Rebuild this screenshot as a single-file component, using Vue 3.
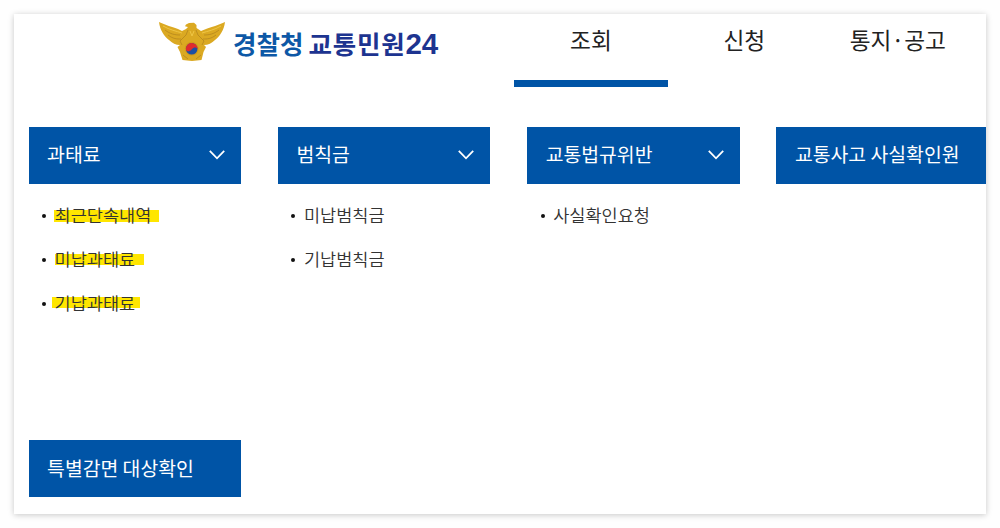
<script setup>
import { ref } from 'vue'

const tabs = ref([
  { name: '조회', active: true },
  { name: '신청', active: false },
  { name: '통지·공고', active: false },
])

const menus = ref([
  {
    title: '과태료',
    arrow: true,
    items: [
      { text: '최근단속내역', mark: 'mark_a' },
      { text: '미납과태료', mark: 'mark_b' },
      { text: '기납과태료', mark: 'mark_c' },
    ],
  },
  { title: '범칙금', arrow: true, items: [{ text: '미납범칙금' }, { text: '기납범칙금' }] },
  { title: '교통법규위반', arrow: true, items: [{ text: '사실확인요청' }] },
  { title: '교통사고 사실확인원', arrow: false, items: [] },
  { title: '특별감면 대상확인', arrow: false, items: [] },
])
</script>

<template>
<div class="page">
  <div class="card">
    <header class="header">
      <a class="logo">
        <svg class="emblem" viewBox="0 0 66 40" width="66" height="40">
          <path d="M0 1 C6 4 14 6 19 8 L23 10 L27 8 L29 6 L26 5.2 L27 3.4 L30 2 L35 1.8 L37.5 4 L37.5 7 L42 10 L47 8 C52 6 60 4 66 1 C65 9 61 15 56 19 C53 22 49 24 45 24 L47 26 L44.5 31 L42.5 39 L33 40 L23.5 39 L21 31 L18.5 26 L21 24 C17 24 13 22 10 19 C5 15 1 9 0 1Z" fill="#dba922" />
          <g fill="none" stroke="#a77a1d" stroke-width=".6">
            <path d="M6 9 C11 13 16 14 21 14 M9 14 C14 18 18 18 22 18 M60 9 C55 13 50 14 45 14 M57 14 C52 18 48 18 44 18" />
            <path d="M29 9 L27 14 L21 20 L23 24 M37 9 L39 14 L45 20 L43 24 M24 34 L29 38 M42 34 L37 38" />
          </g>
          <path d="M4 5 C11 9 17 10 23 12 M62 5 C55 9 49 10 43 12 M31 10 L33 15 L35 10" fill="none" stroke="#efc645" stroke-width="1" />
          <circle cx="32.7" cy="27.8" r="7" fill="#d39b1b" />
          <circle cx="32.7" cy="27.8" r="5.8" fill="#1d4fa3" />
          <path d="M27.1 29.3 A5.8 5.8 0 1 1 38.5 28.1 C36.7 25.8 34.7 26.3 33 28.1 C31.2 30.3 28.9 31.3 27.1 29.3Z" fill="#e02b2d" />
        </svg>
        <span class="logo_text"><span class="police">경찰청</span><span class="service">교통민원<span class="num">24</span></span></span>
      </a>
      <nav class="nav">
        <a v-for="tab in tabs" :key="tab.name" class="tab" :class="{ active: tab.active }">{{ tab.name }}</a>
      </nav>
    </header>
    <main class="menus">
      <section v-for="menu in menus" :key="menu.title" class="menu">
        <h2 class="title">
          <span>{{ menu.title }}</span>
          <svg v-if="menu.arrow" class="arrow" viewBox="0 0 16 10" width="16" height="10">
            <path d="M.8 .9 L8 8.3 L15.2 .9" fill="none" stroke="#fff" stroke-width="1.8" />
          </svg>
        </h2>
        <ul v-if="menu.items.length" class="list">
          <li v-for="item in menu.items" :key="item.text" class="item">
            <span class="dot"></span>
            <span class="label" :class="item.mark">{{ item.text }}</span>
          </li>
        </ul>
      </section>
    </main>
  </div>
</div>
</template>

<style>
  body {
    background: #fefefe;
  }
</style>

<style scoped>
  .page {
    height: 528px;
    padding: 14px;
    box-sizing: border-box;
    overflow: hidden;
    font-family: "Noto Sans CJK KR", sans-serif;
    color: #222;
  }

  .card {
    height: 500px;
    background: #fff;
    box-shadow: 0 1px 6px rgba(0, 0, 0, .22);
  }

  .header {
    display: flex;
    height: 73px;
  }

  .logo {
    display: flex;
    width: 500.3px;
    padding: 7px 0 0 145px;
    box-sizing: border-box;
    flex: none;
  }

  .emblem {
    flex: none;
  }

  .logo_text {
    display: flex;
    gap: 5px;
    margin-left: 8px;
    height: 44px;
    line-height: 44px;
    font-size: 25.5px;
    font-weight: 700;
    white-space: nowrap;
  }

  .police {
    color: #0d58a6;
  }

  .service {
    color: #1d3490;
    letter-spacing: .8px;
  }

  .num {
    font-family: "Liberation Sans", sans-serif;
    font-size: 29.5px;
    letter-spacing: 0;
  }

  .nav {
    display: flex;
  }

  .tab {
    width: 153.4px;
    height: 73px;
    box-sizing: border-box;
    line-height: 52px;
    text-align: center;
    font-size: 22.7px;
  }

  .active {
    border-bottom: 7.5px solid #0054a6;
  }

  .menus {
    display: grid;
    grid-template-columns: repeat(4, 212.5px);
    grid-template-rows: 313.3px 57px;
    column-gap: 36.8px;
    padding: 40px 0 0 14.5px;
    overflow: hidden;
  }

  .title {
    display: flex;
    align-items: center;
    justify-content: space-between;
    height: 56.5px;
    margin: 0;
    padding: 0 16px 0 18.6px;
    box-sizing: border-box;
    background: #0054a6;
    color: #fff;
    font-size: 19.35px;
    font-weight: 400;
    line-height: 54px;
    white-space: nowrap;
  }

  .title span {
    padding-bottom: 2px;
  }

  .list {
    margin: 0;
    padding: 10px 0 0 13.5px;
    list-style: none;
  }

  .item {
    display: flex;
    align-items: center;
    height: 44.3px;
    font-size: 17.55px;
    font-weight: 350;
    color: #333;
  }

  .dot {
    width: 4px;
    height: 4px;
    border-radius: 50%;
    background: #111;
    margin-right: 8.6px;
  }

  .label {
    line-height: 24px;
    padding-bottom: 2px;
    background-repeat: no-repeat;
  }

  .mark_a {
    margin-left: -1px;
    padding: 0 8px 2px 1px;
    background-image: linear-gradient(#ffe600, #ffe600);
    background-size: 100% 12px;
    background-position: 0 7px;
  }

  .mark_b {
    padding-right: 9px;
    background-image: linear-gradient(#ffe600, #ffe600);
    background-size: 100% 11px;
    background-position: 0 7px;
  }

  .mark_c {
    margin-left: -3px;
    padding: 0 5px 2px 3px;
    background-image: linear-gradient(#ffe600, #ffe600);
    background-size: 100% 11px;
    background-position: 0 6px;
  }
</style>
